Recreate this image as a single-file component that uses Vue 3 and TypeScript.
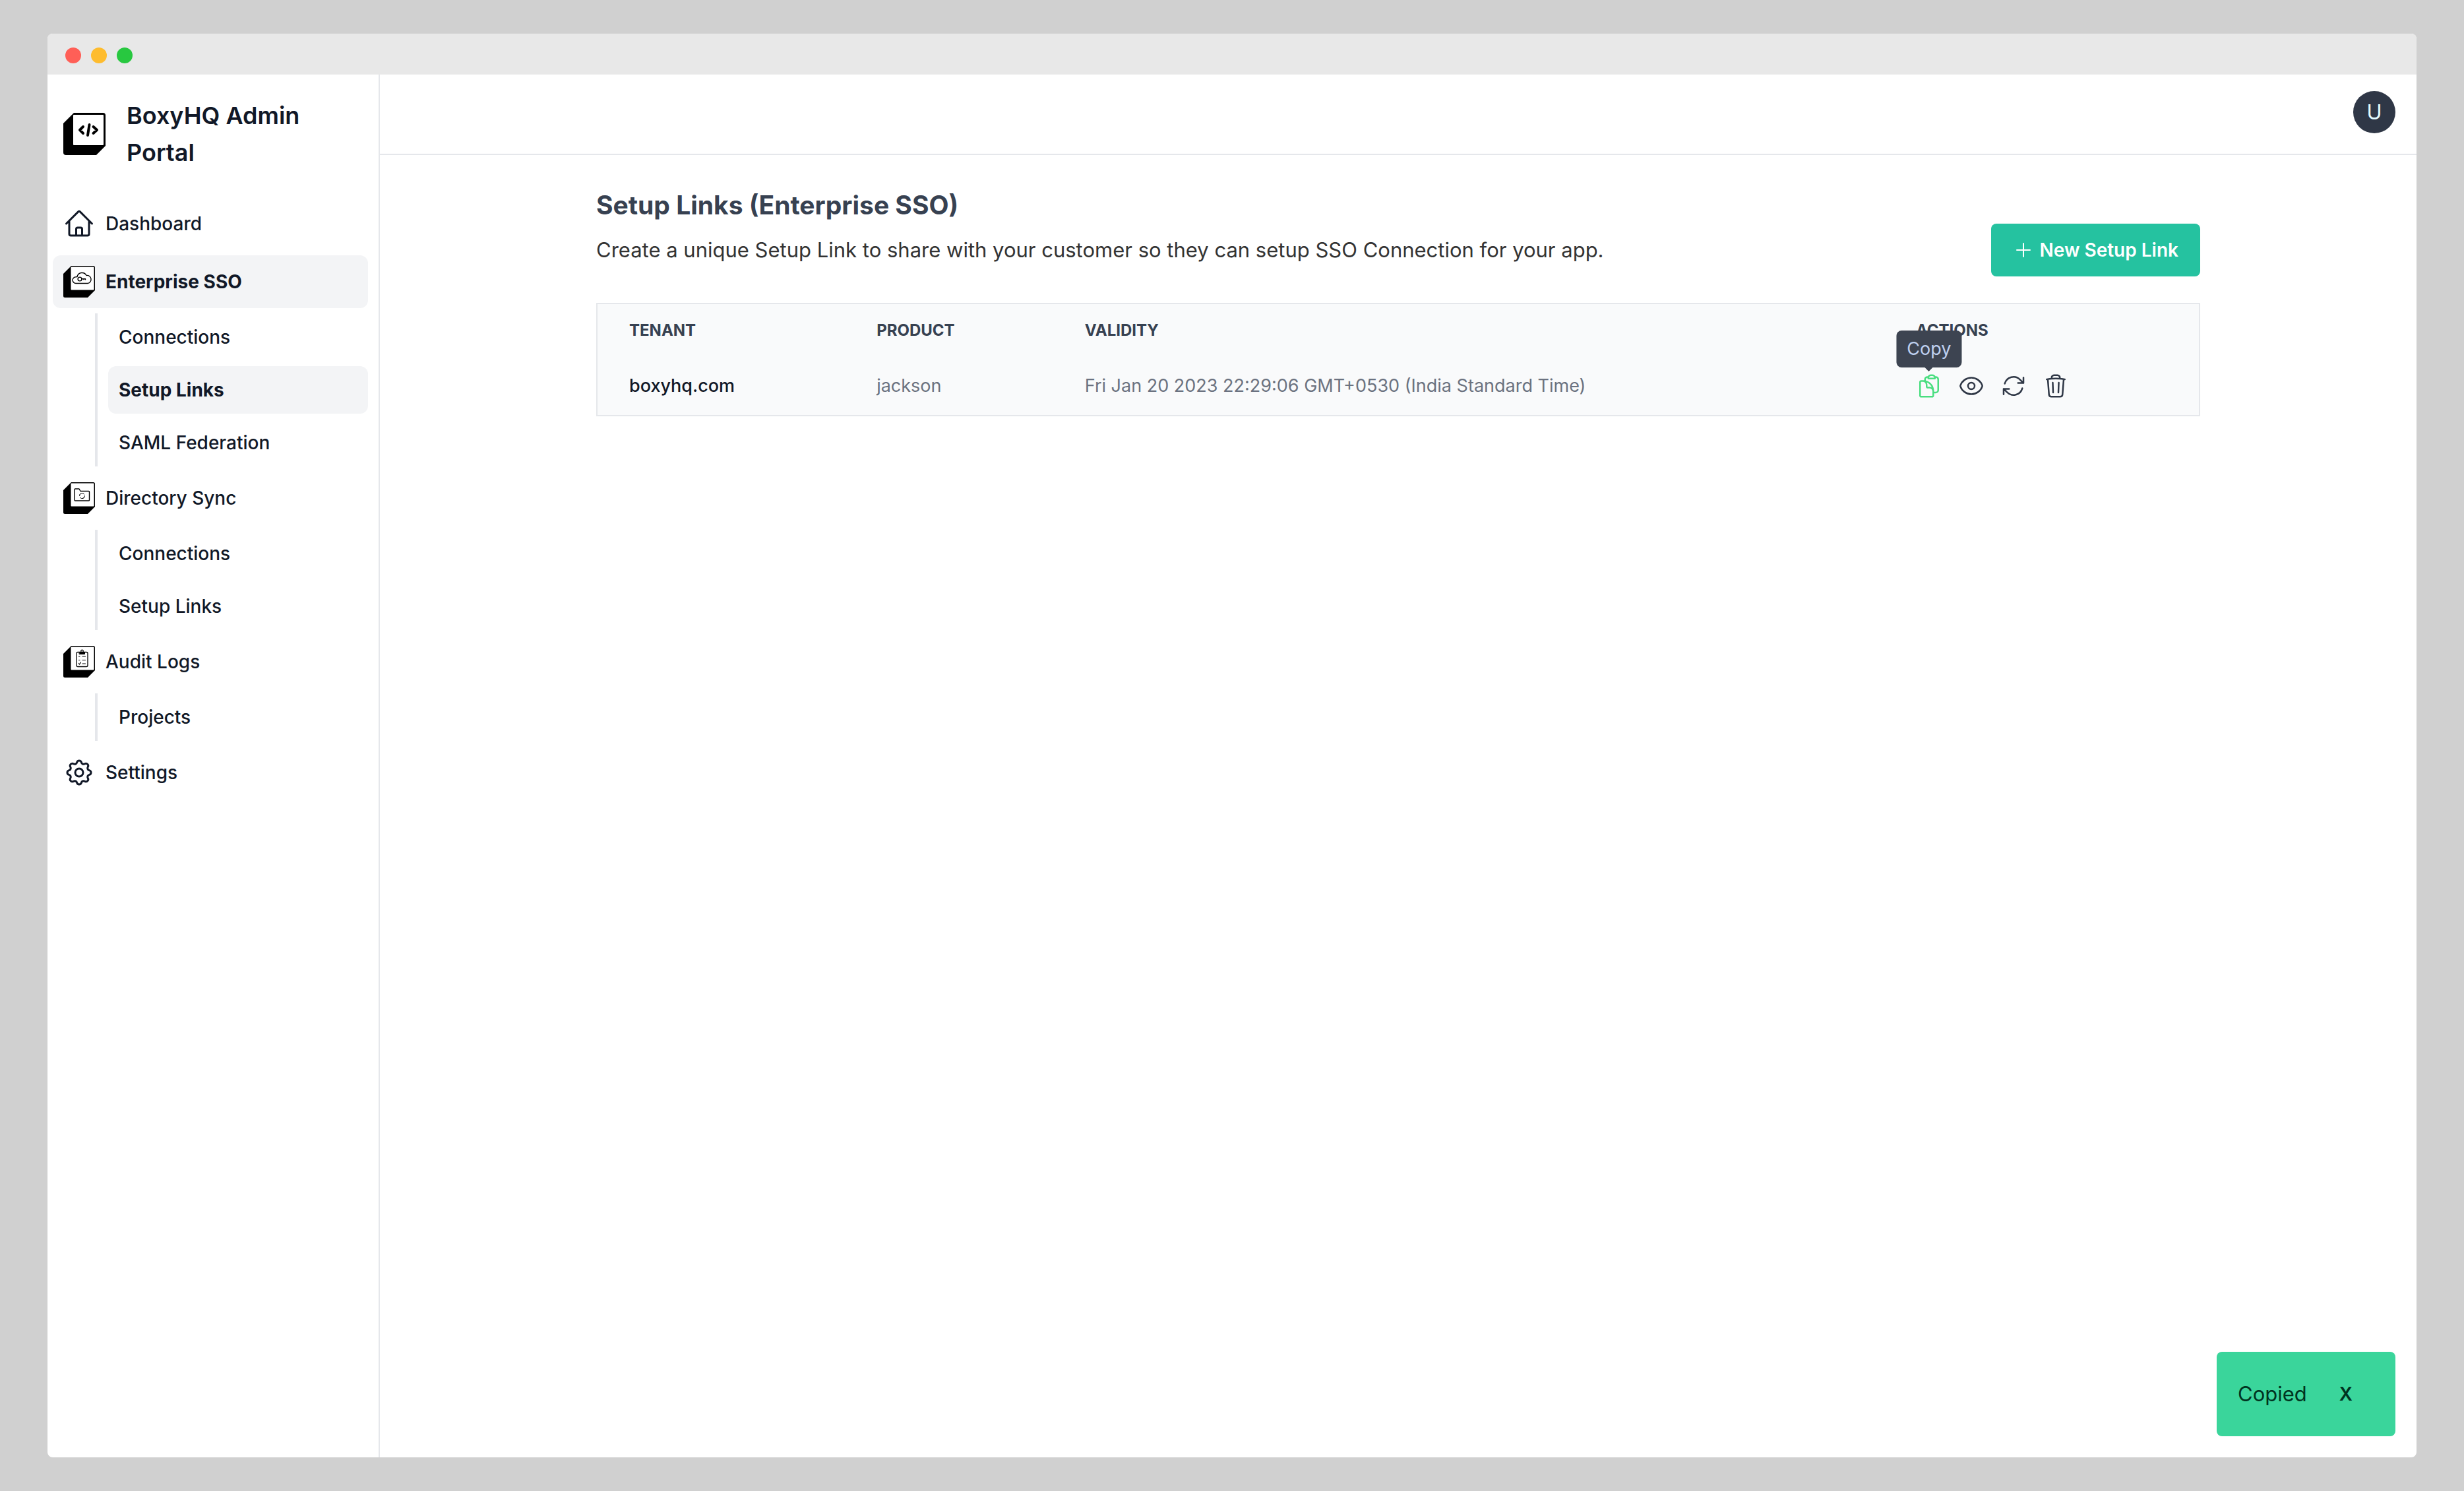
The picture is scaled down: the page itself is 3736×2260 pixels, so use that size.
<script setup lang="ts">
import { ref } from 'vue'

type GlyphName = 'home' | 'cog' | 'sso' | 'directory' | 'audit'

interface NavChild {
  label: string
  active?: boolean
}

interface NavItem {
  label: string
  glyph: GlyphName
  active?: boolean
  children?: NavChild[]
}

interface SetupLink {
  tenant: string
  product: string
  validity: string
}

const navItems: NavItem[] = [
  { label: 'Dashboard', glyph: 'home' },
  {
    label: 'Enterprise SSO',
    glyph: 'sso',
    active: true,
    children: [
      { label: 'Connections' },
      { label: 'Setup Links', active: true },
      { label: 'SAML Federation' },
    ],
  },
  {
    label: 'Directory Sync',
    glyph: 'directory',
    children: [{ label: 'Connections' }, { label: 'Setup Links' }],
  },
  { label: 'Audit Logs', glyph: 'audit', children: [{ label: 'Projects' }] },
  { label: 'Settings', glyph: 'cog' },
]

const setupLinks: SetupLink[] = [
  {
    tenant: 'boxyhq.com',
    product: 'jackson',
    validity: 'Fri Jan 20 2023 22:29:06 GMT+0530 (India Standard Time)',
  },
]

const toastVisible = ref(true)
</script>

<template>
  <div class="desktop">
    <div class="window">
      <div class="titlebar">
        <span class="light light-close"></span>
        <span class="light light-minimise"></span>
        <span class="light light-zoom"></span>
      </div>

      <div class="app">
        <aside class="sidebar">
          <a class="brand" href="#">
            <svg class="brand-logo" viewBox="0 0 64 64" aria-hidden="true">
              <path d="M16 0H60Q64 0 64 4V50L50 64H4Q0 64 0 60V16Z" fill="#000" />
              <rect x="15" y="3" width="46" height="46" rx="1" fill="#fff" />
              <path
                d="M30 21L25 26L30 31M39.500 18L37 34M45.500 21L51 26L45.500 31"
                fill="none"
                stroke="#000"
                stroke-width="4"
                stroke-linecap="round"
                stroke-linejoin="round"
              />
            </svg>
            <span class="brand-name">BoxyHQ Admin Portal</span>
          </a>

          <nav class="nav" aria-label="Main">
            <template v-for="item in navItems" :key="item.label">
              <a class="nav-link" :class="{ active: item.active }" href="#">
                <svg
                  v-if="item.glyph === 'home'"
                  class="nav-icon line-icon"
                  viewBox="0 0 24 24"
                  aria-hidden="true"
                >
                  <path d="M2.25 12l8.954-8.955c.44-.439 1.152-.439 1.591 0L21.75 12M4.5 9.75v10.125c0 .621.504 1.125 1.125 1.125H9.75v-4.875c0-.621.504-1.125 1.125-1.125h2.25c.621 0 1.125.504 1.125 1.125V21h4.125c.621 0 1.125-.504 1.125-1.125V9.75M8.25 21h8.25" />
                </svg>
                <svg
                  v-else-if="item.glyph === 'cog'"
                  class="nav-icon line-icon"
                  viewBox="0 0 24 24"
                  aria-hidden="true"
                >
                  <path d="M10.325 4.317c.426-1.756 2.924-1.756 3.35 0a1.724 1.724 0 002.573 1.066c1.543-.94 3.31.826 2.37 2.37a1.724 1.724 0 001.065 2.572c1.756.426 1.756 2.924 0 3.35a1.724 1.724 0 00-1.066 2.573c.94 1.543-.826 3.31-2.37 2.37a1.724 1.724 0 00-2.572 1.065c-.426 1.756-2.924 1.756-3.35 0a1.724 1.724 0 00-2.573-1.066c-1.543.94-3.31-.826-2.37-2.37a1.724 1.724 0 00-1.065-2.572c-1.756-.426-1.756-2.924 0-3.35a1.724 1.724 0 001.066-2.573c-.94-1.543.826-3.31 2.37-2.37.996.608 2.296.07 2.572-1.065z" />
                  <path d="M15 12a3 3 0 11-6 0 3 3 0 016 0z" />
                </svg>
                <svg v-else class="nav-icon" viewBox="0 0 48 48" aria-hidden="true">
                  <path d="M12 0H45.500Q48 0 48 2.500V37L37 48H2.500Q0 48 0 45.500V12Z" fill="#000" />
                  <rect x="11.500" y="1.500" width="35" height="35" rx="1" fill="#fff" />
                  <g
                    fill="none"
                    stroke="#000"
                    stroke-linecap="round"
                    stroke-linejoin="round"
                  >
                    <g v-if="item.glyph === 'sso'">
                      <path
                        d="M19 26.500A4.800 4.800 0 0 1 19 16.700L21 16.500A7.500 7.500 0 0 1 35 14.500A6 6 0 1 1 37 26.500Z"
                        stroke-width="1.400"
                      />
                      <circle cx="25" cy="20" r="2.900" stroke-width="1.400" />
                      <path d="M28 19.700H33.500M31 20V20.800M33.500 20V20.800" stroke-width="1.400" />
                    </g>
                    <g v-else-if="item.glyph === 'directory'">
                      <path
                        d="M17 11Q17 10 18 10H24L26 13.500H38.500Q39.500 13.500 39.500 14.500V27Q39.500 28 38.500 28H18Q17 28 17 27Z"
                        stroke-width="1.400"
                      />
                      <path
                        d="M24.500 20.500A4 4 0 0 1 31.500 18M32.500 20.500A4 4 0 0 1 25.500 23.300M30 24A4 4 0 0 0 31.500 23M26 17.500L25 18.500"
                        stroke-width="1"
                      />
                    </g>
                    <g v-else>
                      <rect x="20" y="9.500" width="17" height="22" rx="2" stroke-width="1.300" />
                      <circle cx="28.500" cy="8" r="1.800" stroke-width="1.200" />
                      <path d="M24.500 9.500H32.500V12.500H24.500Z" fill="#000" stroke-width="1" />
                      <path
                        d="M23.500 16H25M29 16H33.500M23.500 21.500H25M29 21.500H33.500M23.500 26.500L24.500 28L26.500 25M29 27H33.500"
                        stroke-width="1.200"
                      />
                    </g>
                  </g>
                </svg>
                <span>{{ item.label }}</span>
              </a>

              <div v-if="item.children" class="subnav">
                <a
                  v-for="child in item.children"
                  :key="child.label"
                  class="subnav-link"
                  :class="{ active: child.active }"
                  href="#"
                >{{ child.label }}</a>
              </div>
            </template>
          </nav>
        </aside>

        <div class="content">
          <header class="topbar">
            <button class="avatar" type="button" aria-label="Account menu">U</button>
          </header>

          <main class="page">
            <h2 class="page-title">Setup Links (Enterprise SSO)</h2>
            <div class="page-intro">
              <p class="page-text">
                Create a unique Setup Link to share with your customer so they can setup SSO
                Connection for your app.
              </p>
              <button class="primary-button" type="button">
                <svg class="button-icon line-icon" viewBox="0 0 24 24" aria-hidden="true">
                  <path d="M12 4.500v15m7.500-7.500h-15" />
                </svg>
                New Setup Link
              </button>
            </div>

            <table class="links-table">
              <thead>
                <tr>
                  <th class="col-tenant" scope="col">Tenant</th>
                  <th class="col-product" scope="col">Product</th>
                  <th class="col-validity" scope="col">Validity</th>
                  <th scope="col">Actions</th>
                </tr>
              </thead>
              <tbody>
                <tr v-for="link in setupLinks" :key="link.tenant">
                  <td class="tenant">{{ link.tenant }}</td>
                  <td>{{ link.product }}</td>
                  <td>{{ link.validity }}</td>
                  <td>
                    <div class="actions">
                      <div class="action-wrap">
                        <span class="tooltip" role="tooltip">Copy</span>
                        <button class="action copy" type="button" aria-label="Copy">
                          <svg class="line-icon" viewBox="0 0 24 24" aria-hidden="true">
                            <path d="M8.25 7.5V6.108c0-1.135.845-2.098 1.976-2.192.373-.03.748-.057 1.123-.08M15.75 18H18a2.25 2.25 0 002.25-2.25V6.108c0-1.135-.845-2.098-1.976-2.192a48.424 48.424 0 00-1.123-.08M15.75 18.75v-1.875a3.375 3.375 0 00-3.375-3.375h-1.5a1.125 1.125 0 01-1.125-1.125v-1.5A3.375 3.375 0 006.375 7.5H5.25m11.9-3.664A2.251 2.251 0 0015 2.25h-1.5a2.251 2.251 0 00-2.15 1.586m5.8 0c.065.21.1.433.1.664v.75h-6V4.5c0-.231.035-.454.1-.664M6.75 7.5H4.875c-.621 0-1.125.504-1.125 1.125v12c0 .621.504 1.125 1.125 1.125h9.75c.621 0 1.125-.504 1.125-1.125V16.5a9 9 0 00-9-9z" />
                          </svg>
                        </button>
                      </div>
                      <button class="action" type="button" aria-label="View">
                        <svg class="line-icon" viewBox="0 0 24 24" aria-hidden="true">
                          <path d="M2.036 12.322a1.012 1.012 0 010-.639C3.423 7.51 7.36 4.5 12 4.5c4.638 0 8.573 3.007 9.963 7.178.07.207.07.431 0 .639C20.577 16.49 16.64 19.5 12 19.5c-4.638 0-8.573-3.007-9.963-7.178z" />
                          <path d="M15 12a3 3 0 11-6 0 3 3 0 016 0z" />
                        </svg>
                      </button>
                      <button class="action" type="button" aria-label="Regenerate">
                        <svg class="line-icon" viewBox="0 0 24 24" aria-hidden="true">
                          <path d="M16.023 9.348h4.992v-.001M2.985 19.644v-4.992m0 0h4.992m-4.993 0l3.181 3.183a8.25 8.25 0 0013.803-3.7M4.031 9.865a8.25 8.25 0 0113.803-3.7l3.181 3.182m0-4.991v4.99" />
                        </svg>
                      </button>
                      <button class="action" type="button" aria-label="Delete">
                        <svg class="line-icon" viewBox="0 0 24 24" aria-hidden="true">
                          <path d="M14.74 9l-.346 9m-4.788 0L9.26 9m9.968-3.21c.342.052.682.107 1.022.166m-1.022-.165L18.16 19.673a2.25 2.25 0 01-2.244 2.077H8.084a2.25 2.25 0 01-2.244-2.077L4.772 5.79m14.456 0a48.108 48.108 0 00-3.478-.397m-12 .562c.34-.059.68-.114 1.022-.165m0 0a48.11 48.11 0 013.478-.397m7.5 0v-.916c0-1.18-.91-2.164-2.09-2.201a51.964 51.964 0 00-3.32 0c-1.18.037-2.09 1.022-2.09 2.201v.916m7.5 0a48.667 48.667 0 00-7.5 0" />
                        </svg>
                      </button>
                    </div>
                  </td>
                </tr>
              </tbody>
            </table>
          </main>
        </div>
      </div>

      <div v-if="toastVisible" class="toast" role="status">
        <span>Copied</span>
        <button class="toast-close" type="button" aria-label="Dismiss" @click="toastVisible = false">
          X
        </button>
      </div>
    </div>
  </div>
</template>

<style>
body {
  margin: 0;
}
</style>

<style scoped>
*,
*::before,
*::after {
  box-sizing: border-box;
}

.desktop {
  display: flex;
  min-height: 100vh;
  padding: 51px 72px;
  background: #d0d0d0;
  color: #111827;
  font-family: Inter, 'Liberation Sans', sans-serif;
  font-size: 28px;
  line-height: 40px;
}

button {
  margin: 0;
  padding: 0;
  border: 0;
  background: none;
  color: inherit;
  font: inherit;
}

a {
  color: inherit;
  text-decoration: none;
}

.line-icon {
  fill: none;
  stroke: currentColor;
  stroke-width: 1.5;
  stroke-linecap: round;
  stroke-linejoin: round;
}

.window {
  position: relative;
  display: flex;
  flex: 1;
  flex-direction: column;
  overflow: hidden;
  border-radius: 8px;
  background: #fff;
}

.titlebar {
  display: flex;
  align-items: center;
  gap: 15px;
  height: 62px;
  padding: 4px 27px 0;
  background: #e8e8e8;
}

.light {
  width: 24px;
  height: 24px;
  border-radius: 50%;
}

.light-close {
  background: #ff5f57;
}

.light-minimise {
  background: #febc2e;
}

.light-zoom {
  background: #28c840;
}

.app {
  display: flex;
  flex: 1;
}

.sidebar {
  flex: none;
  width: 504px;
  padding: 34px 16px 0 8px;
  border-right: 2px solid #e5e7eb;
}

.brand {
  display: flex;
  align-items: center;
  gap: 32px;
  margin-bottom: 40px;
  padding: 0 16px;
}

.brand-logo {
  flex: none;
  width: 64px;
  height: 64px;
}

.brand-name {
  font-size: 36px;
  font-weight: 600;
  line-height: 56px;
}

.nav {
  display: flex;
  flex-direction: column;
  gap: 8px;
  font-weight: 500;
}

.nav-link {
  display: flex;
  align-items: center;
  gap: 16px;
  padding: 16px;
  border-radius: 12px;
}

.nav-icon {
  flex: none;
  width: 48px;
  height: 48px;
}

.subnav {
  display: flex;
  flex-direction: column;
  gap: 8px;
  margin-left: 64px;
  padding-left: 16px;
  border-left: 4px solid #e5e7eb;
}

.subnav-link {
  padding: 16px;
  border-radius: 12px;
}

.active {
  background: #f3f4f6;
  font-weight: 700;
}

.content {
  flex: 1;
  min-width: 0;
}

.topbar {
  display: flex;
  justify-content: flex-end;
  height: 122px;
  padding: 25px 32px 0;
  border-bottom: 2px solid #e5e7eb;
}

.avatar {
  width: 64px;
  height: 64px;
  border-radius: 50%;
  background: #2f3746;
  color: #e4fbff;
  font-size: 31px;
}

.page {
  max-width: 2560px;
  margin: 0 auto;
  padding: 48px 64px;
}

.page-title {
  margin: 0;
  color: #374151;
  font-size: 39px;
  font-weight: 700;
  line-height: 56px;
}

.page-intro {
  display: flex;
  align-items: center;
  justify-content: space-between;
  gap: 32px;
  margin-bottom: 40px;
}

.page-text {
  margin: 0;
  color: #333;
  font-size: 31px;
  line-height: 48px;
}

.primary-button {
  display: flex;
  flex: none;
  align-items: center;
  gap: 8px;
  height: 80px;
  padding: 0 33px;
  border-radius: 8px;
  background: #25c2a0;
  color: #fff;
  font-weight: 600;
}

.button-icon {
  width: 32px;
  height: 32px;
}

.links-table {
  width: 100%;
  border: 2px solid #e5e7eb;
  border-spacing: 0;
  background: #f9fafb;
  text-align: left;
}

.links-table th {
  padding: 24px 48px;
  color: #374151;
  font-size: 24px;
  font-weight: 700;
  line-height: 32px;
  text-transform: uppercase;
}

.links-table td {
  padding: 24px 48px;
  color: #6b7280;
  font-size: 27px;
}

.links-table .tenant {
  color: #111827;
  font-weight: 500;
}

.col-tenant {
  width: 15.45%;
}

.col-product {
  width: 13%;
}

.col-validity {
  width: 51.9%;
}

.actions {
  display: flex;
  gap: 24px;
}

.action-wrap {
  position: relative;
  width: 40px;
  height: 40px;
}

.action {
  display: block;
  width: 40px;
  height: 40px;
  color: #2f3746;
}

.action svg {
  display: block;
}

.copy {
  color: #4ade80;
}

.tooltip {
  position: absolute;
  bottom: calc(100% + 8px);
  left: 50%;
  padding: 8px 16px;
  border-radius: 8px;
  background: #3d4451;
  color: #bfd0f0;
  transform: translateX(-50%);
}

.tooltip::after {
  position: absolute;
  top: 100%;
  left: 50%;
  border: 6px solid transparent;
  border-top-color: #3d4451;
  border-bottom: 0;
  content: '';
  transform: translateX(-50%);
}

.toast {
  position: absolute;
  right: 32px;
  bottom: 32px;
  display: flex;
  align-items: center;
  gap: 16px;
  padding: 32px;
  border-radius: 8px;
  background: #3ad59b;
  color: #003320;
  font-size: 31px;
}

.toast-close {
  height: 64px;
  padding: 0 33px;
  font-size: 28px;
  font-weight: 600;
}
</style>
